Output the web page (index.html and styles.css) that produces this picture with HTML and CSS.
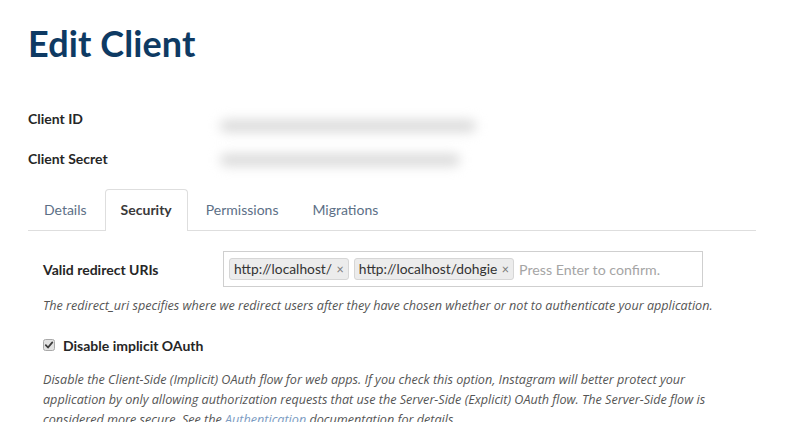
FILE: index.html
```html
<!DOCTYPE html>
<html>
<head>
<meta charset="utf-8">
<link rel="stylesheet" href="styles.css">
</head>
<body>
<div class="page">
  <h1 class="title">Edit Client</h1>
  <div class="meta">
    <div class="meta-row"><span class="meta-label">Client ID</span><span class="blur blur-id"></span></div>
    <div class="meta-row"><span class="meta-label">Client Secret</span><span class="blur blur-secret"></span></div>
  </div>
  <ul class="tabs">
    <li class="tab">Details</li>
    <li class="tab active">Security</li>
    <li class="tab">Permissions</li>
    <li class="tab">Migrations</li>
  </ul>
  <div class="panel">
    <div class="field">
      <label class="field-label">Valid redirect URIs</label>
      <div class="tag-input">
        <span class="tag">http://localhost/ <span class="x">×</span></span>
        <span class="tag">http://localhost/dohgie <span class="x">×</span></span>
        <span class="placeholder">Press Enter to confirm.</span>
      </div>
    </div>
    <p class="help">The redirect_uri specifies where we redirect users after they have chosen whether or not to authenticate your application.</p>
    <div class="check-row">
      <span class="check"><svg width="12" height="12" viewBox="0 0 12 12"><rect x="0.5" y="0.5" width="11" height="11" rx="2" fill="#e2e2e2" stroke="#a9a9a9"/><path d="M2.8 6.2 L5 8.5 L9.3 3.4" fill="none" stroke="#3d3d3d" stroke-width="1.8" stroke-linecap="round" stroke-linejoin="round"/></svg></span>
      <span class="check-label">Disable implicit OAuth</span>
    </div>
    <p class="help para">Disable the Client-Side (Implicit) OAuth flow for web apps. If you check this option, Instagram will better protect your application by only allowing authorization requests that use the Server-Side (Explicit) OAuth flow. The Server-Side flow is considered more secure. See the <a class="link">Authentication</a> documentation for details.</p>
  </div>
</div>
</body>
</html>
```
FILE: styles.css
```css
html, body { margin: 0; padding: 0; background: #fff; }
body { font-family: Lato, "Open Sans", sans-serif; color: #262626; overflow: hidden; }
.page { padding: 0 49px 0 28px; }
.title { margin: 0; padding-top: 22px; font-size: 36px; line-height: 42px; font-weight: 700; color: #0e3a63; letter-spacing: 0.1px; }
.meta { margin-top: 34px; }
.meta-row { display: flex; align-items: center; height: 40px; }
.meta-label { width: 192px; font-size: 14px; font-weight: 700; color: #262626; }
.blur { display: block; height: 12px; background: #d9d9d9; filter: blur(6px); border-radius: 6px; }
.blur-id { width: 256px; margin-top: 16px; }
.blur-secret { width: 240px; margin-top: 4px; }
.tabs { list-style: none; margin: 11px 0 0; padding: 0; display: flex; border-bottom: 1px solid #dedede; }
.tab { padding: 0 15px; height: 40px; line-height: 40px; border: 1px solid transparent; border-bottom: none; margin-right: 2px; font-size: 14px; color: #5c6f86; border-radius: 4px 4px 0 0; }
.tab.active { border-color: #dedede; background: #fff; margin-bottom: -1px; height: 41px; font-weight: 700; color: #3a3a3a; }
.panel { padding: 20px 15px 0; }
.field { display: flex; align-items: center; }
.field-label { width: 180px; font-size: 14px; font-weight: 700; color: #262626; }
.tag-input { width: 468px; height: 34px; border: 1px solid #cfcfcf; display: flex; align-items: center; padding: 0 5px; gap: 5px; }
.tag { background: #ececec; border: 1px solid #d6d6d6; border-radius: 3px; height: 20px; line-height: 20px; padding: 0 4px; font-size: 13.8px; color: #333; white-space: nowrap; }
.tag .x { color: #777; font-size: 12.5px; margin-left: 1px; }
.placeholder { font-size: 14.2px; color: #a5a5a5; }
.help { margin: 9px 0 0; font-family: "Open Sans", Lato, sans-serif; font-size: 12.6px; line-height: 20px; font-style: italic; color: #555; }
.check-row { display: flex; align-items: center; margin-top: 21px; }
.check { display: block; width: 12px; height: 12px; margin: -2px 8px 0 0; }
.check svg { display: block; }
.check-label { font-size: 14px; font-weight: 700; color: #262626; }
.para { margin-top: 16px; width: 682px; }
.link { color: #7b9bc2; }
```
